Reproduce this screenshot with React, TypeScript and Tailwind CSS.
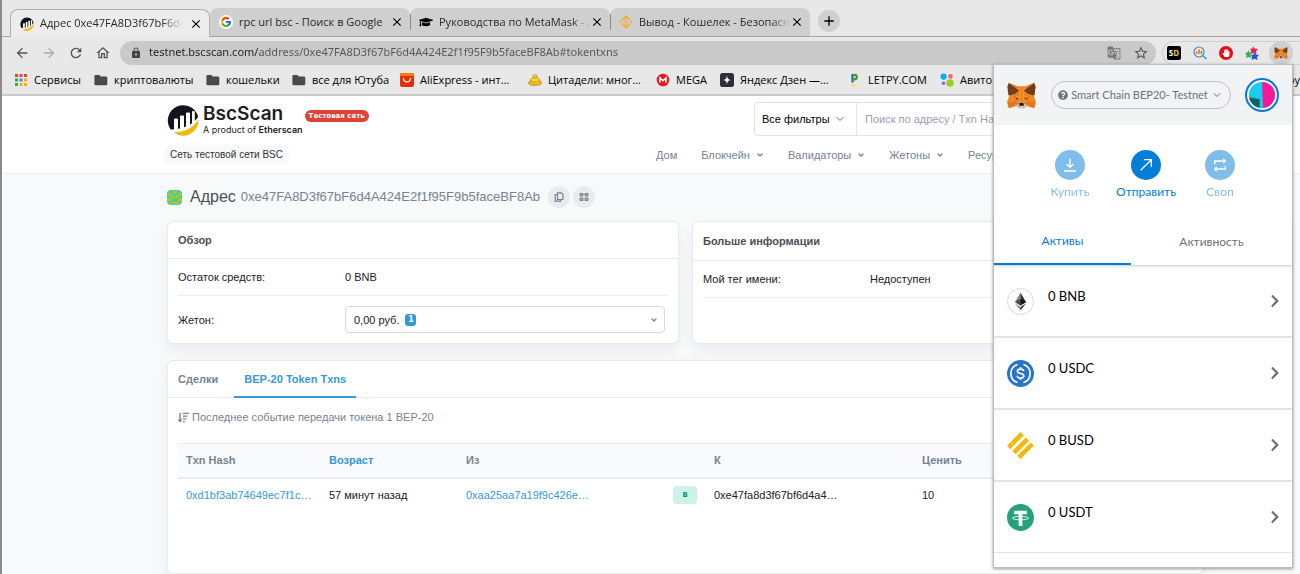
import type { ReactNode } from "react";
import { FcGoogle } from "react-icons/fc";
import { FaGraduationCap, FaHandPaper, FaSortAmountDown, FaQuestionCircle, FaChevronRight } from "react-icons/fa";
import { SiBinance } from "react-icons/si";
import {
    MdAdd,
    MdArrowBack,
    MdArrowForward,
    MdClose,
    MdGTranslate,
    MdLock,
    MdOutlineHome,
    MdRefresh,
    MdStarBorder
} from "react-icons/md";
import { ChevronDown } from "lucide-react";

function FoxHalf() {
    return (
        <>
            <polygon fill="#CDBDB2" points="60.75 173.25 88.3 180.6 88.3 171 90.6 168.75 106.3 168.75 106.3 188 89.4 188 68.6 178.9" />
            <polygon fill="#F6851B" points="16.3 96.2 .6 141.75 39.9 139.5 65.25 139.5 65.25 119.8 64.1 79.3 58.5 83.8" />
            <polygon fill="#E2761B" points="46.1 101.25 92.25 102.4 87.2 126 65.25 120.4" />
            <polygon fill="#E4761B" points="46.1 101.8 65.25 119.8 65.25 137.8" />
            <polygon fill="#F6851B" points="65.25 120.4 87.75 126 95 150.2 90 153 65.25 138.4" />
            <polygon fill="#E4761B" points="65.25 138.4 60.75 173.25 90.6 152.4" />
            <polygon fill="#E4761B" points="92.25 102.4 95 150.2 86.6 125.7" />
            <polygon fill="#CD6116" points="39.4 138.9 65.25 138.4 60.75 173.25" />
            <polygon fill="#E4761B" points="12.9 188.4 60.75 173.25 39.4 138.9 .6 141.75" />
            <polygon fill="#E8821E" points="88.9 58.5 64.7 78.75 46.1 101.25 92.25 102.9" />
            <polygon fill="#D7C1B3" points="60.75 173.25 90.6 152.4 88.3 170.4 88.3 180.6 68 176.6" />
            <polygon fill="#233447" points="70.3 112.5 64.1 125.4 86 119.8" />
            <polygon fill="#E4761B" points="12.4 .6 88.9 58.5 75.9 27" />
            <polygon fill="#763D16" points="12.4 .6 2.25 31.5 7.9 65.25 3.9 67.5 9.6 72.6 5 76.5 11.25 82.1 7.3 85.5 16.3 96.75 58.5 83.8 79 67.2 88.9 58.5" />
        </>
    );
}

function Fox({ className }: { className: string }) {
    return (
        <svg viewBox="0 0 212 189" className={className} aria-hidden="true">
            <polygon fill="#F6851B" points="75.4 27 88.9 58.5 95 150.2 117 150.2 123.75 58.5 136.1 27" />
            <FoxHalf />
            <g transform="translate(212 0) scale(-1 1)">
                <FoxHalf />
            </g>
            <polygon fill="#161616" points="90.6 152.4 88.3 171 91 168.75 120.4 168.75 123.75 171 121.5 152.4 117 149.6 94.5 150.2" />
        </svg>
    );
}

function BscMark({ className }: { className: string }) {
    return (
        <svg viewBox="0 0 32 32" className={className} aria-hidden="true">
            <path fill="#12161c" d="M3.600 25.400A15.400 15.400 0 1 1 31.200 13C28 17.500 24 20.300 19.500 22.300L17 23.300C13 24.800 9 25.500 3.600 25.400Z" />
            <path fill="#fff" d="M7 15.500q0-1 1-1h2q1 0 1 1V26H7zM13 12.500q0-1 1-1h2q1 0 1 1V25h-4zM19 9.500q0-1 1-1h2q1 0 1 1V22l-4 2zM25 8q0-1 1-1h.8q1 0 1 1v11L25 21z" />
            <path fill="#f0b90b" d="M31.400 15.500A15.400 15.400 0 0 1 6.500 28.300C16 28.500 26 24.500 31.400 15.500Z" />
        </svg>
    );
}

function FolderIcon() {
    return (
        <svg viewBox="0 0 14 12" className="h-3 w-3.5" aria-hidden="true">
            <path fill="#4a4a4a" d="M1.500 1h4l1.300 1.500H12A1.300 1.300 0 0 1 13.300 3.800V10A1.300 1.300 0 0 1 12 11.300H1.700A1.300 1.300 0 0 1 .4 10V2.200A1.200 1.200 0 0 1 1.500 1Z" />
        </svg>
    );
}

function AppsIcon() {
    const colors = ["#e94335", "#e94335", "#e94335", "#34a853", "#4285f4", "#f4b400", "#34a853", "#f4b400", "#f4b400"];
    return (
        <svg viewBox="0 0 12 12" className="h-3 w-3.5" aria-hidden="true">
            {colors.map((c, i) => (
                <rect key={i} x={(i % 3) * 4.5} y={Math.floor(i / 3) * 4.5} width="3" height="3" fill={c} />
            ))}
        </svg>
    );
}

const icons = {
    ali: (
        <svg viewBox="0 0 14 14" className="size-3.5" aria-hidden="true">
            <rect width="14" height="14" rx="2" fill="#e62e04" />
            <path d="M0 2a2 2 0 0 1 2-2h10a2 2 0 0 1 2 2v1H0z" fill="#ff7a00" />
            <path d="M3.500 5.500c.6 4.500 6.400 4.500 7 0" fill="none" stroke="#fff" strokeWidth="1.300" strokeLinecap="round" />
        </svg>
    ),
    citadels: (
        <svg viewBox="0 0 14 14" className="size-3.5" aria-hidden="true">
            <ellipse cx="7" cy="3.300" rx="2.300" ry="1.600" fill="#f4cf3c" stroke="#b88710" strokeWidth=".7" />
            <path d="M2 8q0-3.300 5-3.300t5 3.300v2H2z" fill="#f4cf3c" stroke="#b88710" strokeWidth=".7" />
            <ellipse cx="7" cy="10" rx="6.600" ry="2.600" fill="#eab81c" stroke="#b88710" strokeWidth=".7" />
            <path d="M4 7.300h6" stroke="#fff0a0" strokeWidth=".8" />
        </svg>
    ),
    mega: (
        <svg viewBox="0 0 14 14" className="size-3.5" aria-hidden="true">
            <circle cx="7" cy="7" r="6.300" fill="#e31b23" />
            <path d="M4 9.500V4.800l3 3 3-3v4.700" fill="none" stroke="#fff" strokeWidth="1.500" />
        </svg>
    ),
    zen: (
        <svg viewBox="0 0 14 14" className="size-3.5" aria-hidden="true">
            <rect width="14" height="14" rx="2.500" fill="#2c3036" />
            <path d="M7 2c.2 3.700 1.300 4.800 5 5-3.700.2-4.800 1.300-5 5-.2-3.700-1.300-4.800-5-5 3.700-.2 4.800-1.300 5-5Z" fill="#fff" />
        </svg>
    ),
    letpy: (
        <svg viewBox="0 0 14 14" className="size-3.5" aria-hidden="true">
            <path d="M4.500 9.500V1" stroke="#21659c" strokeWidth="2.200" />
            <path d="M5.500 1.800h1a2.200 2.200 0 0 1 0 4.600h-1" fill="none" stroke="#3a9e2c" strokeWidth="2.200" />
            <path d="M3.400 12.300h4" stroke="#f3e52c" strokeWidth="1.800" />
        </svg>
    ),
    avito: (
        <svg viewBox="0 0 14 14" className="size-3.5" aria-hidden="true">
            <circle cx="3.600" cy="3.600" r="3.100" fill="#00aaff" />
            <circle cx="10.500" cy="3.400" r="2.300" fill="#ff6163" />
            <circle cx="3.500" cy="10.300" r="1.800" fill="#965eeb" />
            <circle cx="10" cy="10" r="3.800" fill="#97cf26" />
        </svg>
    )
};

const tabs = [
    { title: "Адрес 0xe47FA8D3f67bF6d4A", icon: <BscMark className="size-3.5 shrink-0" />, active: true, fade: true },
    { title: "rpc url bsc - Поиск в Google", icon: <FcGoogle className="size-3.5 shrink-0 rounded-full bg-white p-px" /> },
    { title: "Руководства по MetaMask - Д", icon: <FaGraduationCap className="size-3.5 shrink-0 text-black" />, divider: true, fade: true },
    { title: "Вывод - Кошелек - Безопасн", icon: <SiBinance className="size-3.5 shrink-0 text-[#f0b03a]" />, divider: true, fade: true }
];

const bookmarks: { label: string; icon: ReactNode; width: string }[] = [
    { label: "Сервисы", icon: <AppsIcon />, width: "w-20" },
    { label: "криптовалюты", icon: <FolderIcon />, width: "w-28" },
    { label: "кошельки", icon: <FolderIcon />, width: "w-[86px]" },
    { label: "все для Ютуба", icon: <FolderIcon />, width: "w-[108px]" },
    { label: "AliExpress - инт…", icon: icons.ali, width: "w-32" },
    { label: "Цитадели: мног…", icon: icons.citadels, width: "w-32" },
    { label: "MEGA", icon: icons.mega, width: "w-16" },
    { label: "Яндекс Дзен —…", icon: icons.zen, width: "w-32" },
    { label: "LETPY.COM", icon: icons.letpy, width: "w-[92px]" },
    { label: "Авито", icon: icons.avito, width: "w-16" }
];

function BrowserChrome() {
    return (
        <div className="border-b-2 border-[#c9c9c9] bg-[#e8e8e8] font-['Open_Sans','Noto_Sans',sans-serif] text-[11px] text-[#2a2a2a]">
            <div className="flex items-end border-b border-[#a6a6a6] pt-2 pl-2">
                {tabs.map((tab) => (
                    <div
                        key={tab.title}
                        className={
                            tab.active
                                ? "relative z-10 -mb-px flex h-7 w-50 items-center gap-1.5 rounded-t-lg border border-b-0 border-[#b0b0b0] bg-[#ececec] pr-1.5 pl-[9px]"
                                : "flex h-7 w-50 items-center rounded-t-lg bg-[#cfcfcf] pr-1.5"
                        }
                    >
                        {!tab.active && (
                            <span className={tab.divider ? "mr-2 h-4 w-px shrink-0 bg-[#8a8a8a]" : "mr-2 h-4 w-px shrink-0"} />
                        )}
                        {tab.icon}
                        <span
                            className={
                                tab.active
                                    ? "min-w-0 flex-1 overflow-hidden whitespace-nowrap [mask-image:linear-gradient(90deg,#000_85%,transparent)]"
                                    : tab.fade
                                      ? "ml-1.5 min-w-0 flex-1 overflow-hidden whitespace-nowrap [mask-image:linear-gradient(90deg,#000_88%,transparent)]"
                                      : "ml-1.5 min-w-0 flex-1 whitespace-nowrap"
                            }
                        >
                            {tab.title}
                        </span>
                        <button aria-label="Закрыть вкладку" className="text-black">
                            <MdClose className="size-3.5" />
                        </button>
                    </div>
                ))}
                <button aria-label="Новая вкладка" className="mb-1 ml-2 flex size-5.5 items-center justify-center rounded-full bg-[#cfcfcf] text-black">
                    <MdAdd className="size-4" />
                </button>
            </div>

            <div className="flex h-[31px] items-center pl-3">
                <div className="flex w-[106px] items-center gap-[11px] text-[#555]">
                    <button aria-label="Назад"><MdArrowBack className="size-4" /></button>
                    <button aria-label="Вперёд" className="text-[#aaa]"><MdArrowForward className="size-4" /></button>
                    <button aria-label="Обновить"><MdRefresh className="size-4" /></button>
                    <button aria-label="Домой"><MdOutlineHome className="size-4" /></button>
                </div>
                <div className="flex h-6 flex-1 items-center rounded-full bg-[#c9c9c9] pr-[7px] pl-2.5">
                    <MdLock className="size-3 text-[#444]" />
                    <input
                        aria-label="Адресная строка"
                        defaultValue="testnet.bscscan.com/address/0xe47FA8D3f67bF6d4A424E2f1f95F9b5faceBF8Ab#tokentxns"
                        className="ml-[7px] min-w-0 flex-1 bg-[linear-gradient(90deg,#222_110px,#555_110px)] bg-clip-text font-['Noto_Sans',sans-serif] text-[11px] text-transparent outline-none"
                    />
                    <MdGTranslate className="mr-3 size-3.5 text-[#777]" />
                    <MdStarBorder className="size-4 text-[#555]" />
                </div>
                <div className="ml-1.5 flex h-6 w-[138px] items-center gap-3 rounded-l-full border border-r-0 border-[#cfcfcf] pl-1">
                    <span className="flex size-3.5 items-center justify-center rounded-xs bg-black text-[8px] font-bold text-white">
                        S<span className="text-[#f4d21f]">D</span>
                    </span>
                    <svg viewBox="0 0 14 14" className="size-3.5" aria-hidden="true">
                        <circle cx="6" cy="6" r="5" fill="#fbe9dc" stroke="#3d8fce" strokeWidth="1.200" />
                        <path d="M3.500 8V5.500M6 8V3.500M8.500 8V5" stroke="#e57728" strokeWidth="1.700" />
                        <path d="m10 10 3 2.500" stroke="#3d8fce" strokeWidth="1.600" strokeLinecap="round" />
                    </svg>
                    <span className="flex size-3.5 items-center justify-center rounded-full bg-[#e3101a] text-white">
                        <FaHandPaper className="size-2" />
                    </span>
                    <svg viewBox="0 0 14 14" className="size-3.5" aria-hidden="true">
                        <path d="m8 0 1.500 2.500L13 3l-2 2.500.5 2.500L8 7 5.500 8l.7-3L5 2.500l2.500.2z" fill="#e6214f" />
                        <path d="m3.500 4 1 2.500L7 7 5.500 9l.5 3-2.700-1L1 12l.5-3L0 7l2.500-.5z" fill="#2fb457" />
                        <path d="m9.500 6.500 1.500 2 3 .5-2 2 .5 3-3-1.200L6.500 14 7 11 6 9l2.500-.5z" fill="#2d4fe0" />
                    </svg>
                    <span className="-ml-0.5 flex size-6 items-center justify-center rounded-full bg-[#cfcfcf]">
                        <Fox className="h-3 w-3.5" />
                    </span>
                </div>
            </div>

            <nav className="flex h-[26px] items-center pb-0.5 pl-3 whitespace-nowrap text-black">
                {bookmarks.map((b) => (
                    <a key={b.label} href="#" className={`flex shrink-0 items-center gap-1.5 ${b.width}`}>
                        {b.icon}
                        {b.label}
                    </a>
                ))}
                <a href="#" className="ml-auto">ру</a>
            </nav>
        </div>
    );
}

function SiteHeader() {
    const menu = ["Блокчейн", "Валидаторы", "Жетоны", "Ресурсы"];
    return (
        <header className="flex justify-between border-b border-[#eef0f3] bg-white pt-1.5 pr-24 pb-2 pl-[162px]">
            <div>
                <div className="flex pt-0.5 pl-[3px]">
                    <BscMark className="size-8" />
                    <div className="ml-1 font-[Inter,sans-serif] text-[#1c2127]">
                        <div className="text-[19px] leading-5 font-semibold">BscScan</div>
                        <div className="text-[9px] leading-3">
                            A product of <b className="font-semibold">Etherscan</b>
                        </div>
                    </div>
                    <span className="mt-1.5 ml-0.5 h-3 rounded-full bg-[#db4437] px-1 font-['DejaVu_Sans',sans-serif] text-[7px] leading-3 font-bold text-white">
                        Тестовая сеть
                    </span>
                </div>
                <div className="mt-[9px] inline-block rounded-md bg-[#f8f9fa] px-1.5 text-[10px] leading-5 text-[#333]">
                    Сеть тестовой сети BSC
                </div>
            </div>
            <div className="flex w-[549px] flex-col">
                <div className="flex h-[34px] w-[450px] self-end rounded-sm border border-[#dfe3ea] text-[11px]">
                    <div className="relative border-r border-[#dfe3ea]">
                        <select aria-label="Фильтр" className="h-full w-[101px] appearance-none pl-[7px] text-black outline-none">
                            <option>Все фильтры</option>
                        </select>
                        <ChevronDown className="pointer-events-none absolute top-2.5 right-2.5 size-3 text-[#666f7b]" />
                    </div>
                    <input
                        aria-label="Поиск"
                        placeholder="Поиск по адресу / Txn Hash / Блок / Токен"
                        className="min-w-0 flex-1 px-2 outline-none placeholder:text-[#97a0af]"
                    />
                </div>
                <nav className="flex gap-6 pt-[11px] pl-px text-[11px] leading-4 text-[#77838f]">
                    <a href="#">Дом</a>
                    {menu.map((m) => (
                        <a key={m} href="#" className="flex items-center gap-1.5">
                            {m}
                            <ChevronDown className="size-2" strokeWidth={4} />
                        </a>
                    ))}
                </nav>
            </div>
        </header>
    );
}

function AddressPage() {
    return (
        <main className="flex-1 bg-[#f8f9fb] pr-24 pb-px pl-[165px] text-[11px] leading-4 text-[#1e2022]">
            <h1 className="flex h-[47px] items-center pb-px text-[16px] text-[#4a4f55]">
                <svg viewBox="0 0 15 15" className="mr-2 size-[15px]" aria-hidden="true">
                    <rect width="15" height="15" rx="4" fill="#41d68f" />
                    <path d="M1 3h2v3H1zM12 3h2v3h-2zM3 5h3v2H3zM9 5h3v2H9zM5 1h5v2H5zM0 8h4v3H0zM11 8h4v3h-4zM4 7h7v1H4zM3 12h9v2H3z" fill="#d3b52e" />
                </svg>
                Адрес
                <span className="ml-[5px] text-[13px] text-[#77838f]">0xe47FA8D3f67bF6d4A424E2f1f95F9b5faceBF8Ab</span>
                <button aria-label="Копировать адрес" className="ml-2 flex size-5.5 items-center justify-center rounded-full bg-[#e9ebee] text-[#77838f]">
                    <svg viewBox="0 0 10 10" className="size-2.5" fill="none" stroke="currentColor" strokeWidth="1.200">
                        <path d="M3.500.8h3.700L9 2.500v5H3.500zM3.200 2.500H1.200v6.700h5.500V7.600" />
                    </svg>
                </button>
                <button aria-label="QR-код" className="ml-[3px] flex size-5.5 items-center justify-center rounded-full bg-[#e9ebee] text-[#77838f]">
                    <svg viewBox="0 0 10 10" className="size-2.5" fill="#a3abb4" stroke="currentColor" strokeWidth="1">
                        <path d="M1 1.500h3v2.500H1zM6 1.500h3v2.500H6zM1 6h3v2.500H1zM6 6h3v2.500H6z" />
                    </svg>
                </button>
            </h1>

            <div className="grid grid-cols-2 gap-[13px]">
                <section className="rounded-md border border-[#e7eaf3] bg-white pb-2.5 shadow-[0_6px_12px_rgba(140,152,164,0.13)]">
                    <h2 className="border-b border-[#e7eaf3] px-2.5 py-2.5 font-bold text-[#4a4f55]">Обзор</h2>
                    <div className="px-2.5">
                        <div className="flex border-b border-[#eceef2] py-2.5">
                            <span className="w-[167px]">Остаток средств:</span>
                            <span>0 BNB</span>
                        </div>
                        <div className="flex items-center pt-2.5">
                            <span className="w-[167px]">Жетон:</span>
                            <button className="mr-[3px] flex h-[27px] flex-1 items-center rounded-sm border border-[#d5dae2] px-2">
                                0,00 руб.
                                <span className="ml-1.5 h-3 w-[11px] rounded-[3px] bg-[#3498db] text-center font-['DejaVu_Sans',sans-serif] text-[8px] leading-3 font-bold text-white">1</span>
                                <ChevronDown className="-mr-0.5 ml-auto size-2 text-[#77838f]" strokeWidth={4} />
                            </button>
                        </div>
                    </div>
                </section>
                <section className="rounded-md border border-[#e7eaf3] bg-white shadow-[0_6px_12px_rgba(140,152,164,0.13)]">
                    <h2 className="border-b border-[#e7eaf3] px-2.5 py-[11px] font-bold text-[#4a4f55]">Больше информации</h2>
                    <div className="mx-2.5 flex border-b border-[#eceef2] py-2.5">
                        <span className="w-[167px]">Мой тег имени:</span>
                        <span>Недоступен</span>
                    </div>
                </section>
            </div>

            <section className="mt-4 h-[214px] rounded-md border border-[#e7eaf3] bg-white shadow-[0_6px_12px_rgba(140,152,164,0.13)]">
                <div className="flex h-[37px] items-stretch border-b border-[#e7eaf3] font-bold text-[#77838f]">
                    <button className="px-2.5">Сделки</button>
                    <button className="-mb-px ml-1.5 border-b-2 border-[#3498db] px-2.5 text-[#3498db]">BEP-20 Token Txns</button>
                </div>
                <div className="px-2.5">
                    <p className="flex items-center gap-[3px] py-[11px] text-[#77838f]">
                        <FaSortAmountDown className="size-[11px]" />
                        Последнее событие передачи токена 1 BEP-20
                    </p>
                    <table className="mt-[7px] w-full table-fixed text-left">
                        <thead>
                            <tr className="h-[34px] border-t border-b-2 border-[#e7eaf3] bg-[#f8fafd] text-[#77838f]">
                                <th className="w-[143px] pl-2">Txn Hash</th>
                                <th className="w-[137px] pl-2"><a href="#" className="text-[#3498db]">Возраст</a></th>
                                <th className="w-[207px] pl-2">Из</th>
                                <th className="w-[41px]"></th>
                                <th className="w-[208px] pl-2">К</th>
                                <th className="pl-2">Ценить</th>
                            </tr>
                        </thead>
                        <tbody>
                            <tr className="h-[34px]">
                                <td className="pl-2"><a href="#" className="text-[#3498db]">0xd1bf3ab74649ec7f1c…</a></td>
                                <td className="pl-2">57 минут назад</td>
                                <td className="pl-2"><a href="#" className="text-[#3498db]">0xaa25aa7a19f9c426e…</a></td>
                                <td>
                                    <span className="ml-2 block w-6 rounded-sm bg-[#ccf2ea] text-center font-['DejaVu_Sans',sans-serif] text-[8px] leading-[18px] font-bold text-[#02977e]">
                                        в
                                    </span>
                                </td>
                                <td className="pl-2">0xe47fa8d3f67bf6d4a4…</td>
                                <td className="pl-2">10</td>
                            </tr>
                        </tbody>
                    </table>
                </div>
            </section>
        </main>
    );
}

const assets = [
    {
        label: "0 BNB",
        icon: (
            <svg viewBox="0 0 27 27" className="size-[27px]" aria-hidden="true">
                <circle cx="13.500" cy="13.500" r="13" fill="#fff" stroke="#d6d9dc" />
                <path d="M13.500 4.500v13L8 14z" fill="#8a8a8a" />
                <path d="M13.500 4.500v13L19 14z" fill="#303030" />
                <path d="m13.500 10.800-5.500 3.200 5.500 3.500z" fill="#4a4a4a" />
                <path d="m13.500 10.800 5.500 3.200-5.500 3.500z" fill="#141414" />
                <path d="M8 15.500l5.500 3.400V22.500z" fill="#8a8a8a" />
                <path d="M19 15.500l-5.500 3.400V22.500z" fill="#303030" />
            </svg>
        )
    },
    {
        label: "0 USDC",
        icon: (
            <svg viewBox="0 0 32 32" className="size-[27px]" fill="none" stroke="#fff" aria-hidden="true">
                <circle cx="16" cy="16" r="16" fill="#2775ca" stroke="none" />
                <path d="M12.500 5.300a11.200 11.200 0 0 0 0 21.400M19.500 5.300a11.200 11.200 0 0 1 0 21.400" strokeWidth="2" />
                <path d="M19.800 13.300c-.4-3.300-7.500-3.300-7.500 0 0 3.700 7.700 1.600 7.700 5.500 0 3.500-7.700 3.500-8-.2M16 8.200v2.600M16 21.200v2.600" strokeWidth="2" />
            </svg>
        )
    },
    {
        label: "0 BUSD",
        icon: (
            <svg viewBox="0 0 32 32" className="size-[27px]" fill="#f0b90b" aria-hidden="true">
                <path d="m16 0 4 4L8 16l-4-4zM22.300 6.500l4 4-16 16-4-4zM28.300 12.300l3.700 3.700-16 16-4-4zM3.800 12.300l4 4-4 4-3.800-4z" />
            </svg>
        )
    },
    {
        label: "0 USDT",
        icon: (
            <svg viewBox="0 0 32 32" className="size-[27px]" aria-hidden="true">
                <circle cx="16" cy="16" r="16" fill="#26a17b" />
                <path d="M8.500 8h15v4.200h-5.300V26h-4.400V12.200H8.500z" fill="#fff" />
                <ellipse cx="16" cy="16.700" rx="9.700" ry="2" fill="none" stroke="#fff" />
            </svg>
        )
    }
];

const actions = [
    { label: "Купить", width: "w-[60px]", color: "opacity-50", d: "M12 2.500v13M7 10.500l5 5 5-5M3 21h18" },
    { label: "Отправить", width: "w-[92px]", color: "", d: "M4 20 20 4M9 4h11v11" },
    { label: "Своп", width: "w-[56px]", color: "opacity-50", d: "M4 11V6H20M17 3l3 3-3 3M20 13v5H4M7 15l-3 3 3 3" }
];

function WalletPopup() {
    return (
        <aside className="absolute top-16 right-[7px] z-20 w-[300px] border border-[#bcbcbc] bg-white pb-3.5 font-[Lato,'Noto_Sans',sans-serif] shadow-[0_1px_3px_rgba(0,0,0,0.4)]">
            <div className="flex h-[60px] items-center justify-between bg-[#f2f3f4] px-[13px]">
                <Fox className="h-[27px] w-[29px]" />
                <button className="flex h-7 w-[180px] items-center justify-between rounded-full border border-[#bbc0c5] px-1.5 text-[11px] whitespace-nowrap text-[#6a737d]">
                    <FaQuestionCircle className="size-2.5" />
                    Smart Chain BEP20- Testnet
                    <ChevronDown className="size-3" />
                </button>
                <button aria-label="Счёт" className="rounded-full border-2 border-[#037dd6] p-0.5">
                    <svg viewBox="0 0 28 28" className="size-[26px] rounded-full" aria-hidden="true">
                        <rect width="28" height="28" fill="#18cdf2" />
                        <path d="M14 0h14v28H15z" fill="#fb1898" />
                        <path d="M0 16.500 11.500 18.500V28H0z" fill="#01645d" />
                        <path d="M0 15l2.500 2L0 19z" fill="#fb5f18" />
                    </svg>
                </button>
            </div>

            <div className="flex justify-center pt-[25px] pl-0.5 text-[12px] text-[#037dd6]">
                {actions.map((a) => (
                    <button key={a.label} className={`flex flex-col items-center gap-[3px] ${a.width} ${a.color}`}>
                        <span className="flex size-[30px] items-center justify-center rounded-full bg-[#037dd6]">
                            <svg viewBox="0 0 24 24" className="size-4" fill="none" stroke="#fff" strokeWidth="2" aria-hidden="true">
                                <path d={a.d} />
                            </svg>
                        </span>
                        {a.label}
                    </button>
                ))}
            </div>

            <div className="mt-[17px] flex h-12 border-b border-[#d8dadd] text-[12px] shadow-[0_1px_2px_rgba(0,0,0,0.1)]">
                <button className="w-[137px] border-b-2 border-[#037dd6] text-[#037dd6]">Активы</button>
                <button className="flex-1 text-[#6a737d]">Активность</button>
            </div>

            <ul>
                {assets.map((a) => (
                    <li key={a.label} className="border-b-2 border-[#e2e4e6] last:border-b">
                        <button className="flex h-[70px] w-full items-center pr-2.5 pl-[13px] text-left text-[13px] text-black">
                            {a.icon}
                            <span className="ml-3.5 flex-1 pb-2">{a.label}</span>
                            <FaChevronRight className="size-3.5 text-[#6a737d]" />
                        </button>
                    </li>
                ))}
            </ul>
        </aside>
    );
}

export default function App() {
    return (
        <div className="relative flex min-h-screen flex-col overflow-hidden border-l-2 border-[#8a8a8a] font-['Liberation_Sans',Arial,sans-serif]">
            <BrowserChrome />
            <SiteHeader />
            <AddressPage />
            <WalletPopup />
        </div>
    );
}
